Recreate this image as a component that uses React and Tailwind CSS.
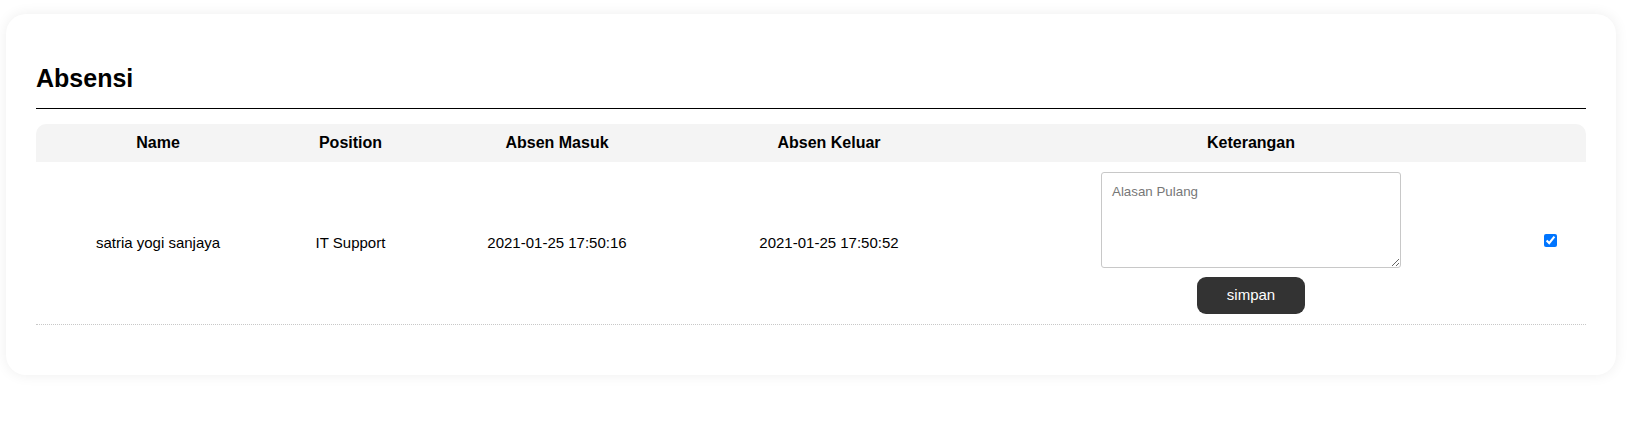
export default function App() {
  return (
    <div className="min-h-[423px] bg-white pt-[14px] pl-[6px] font-['Liberation_Sans',Arial,sans-serif] text-black">
      <div className="w-[1610px] rounded-[20px] bg-white px-[30px] pt-[30px] pb-[50px] shadow-[0_0_14px_rgba(0,0,0,0.07)]">
        <h2 className="mt-[20px] text-[25px] font-bold leading-[29px]">Absensi</h2>
        <hr className="mt-[15px] border-0 border-t border-black" />

        <div className="mt-[15px]">
          <div className="grid h-[38px] grid-cols-[244px_141px_272px_272px_572px_1fr] items-center rounded-t-[10px] bg-[#f4f4f4] text-[16px] font-bold">
            <div className="text-center">Name</div>
            <div className="text-center">Position</div>
            <div className="text-center">Absen Masuk</div>
            <div className="text-center">Absen Keluar</div>
            <div className="text-center">Keterangan</div>
            <div></div>
          </div>

          <div className="grid grid-cols-[244px_141px_272px_272px_572px_1fr] items-center border-b border-dotted border-[#c8c8c8] text-[15px]">
            <div className="text-center">satria yogi sanjaya</div>
            <div className="text-center">IT Support</div>
            <div className="text-center">2021-01-25 17:50:16</div>
            <div className="text-center">2021-01-25 17:50:52</div>
            <div className="flex flex-col items-center gap-[9px] py-[10px]">
              <textarea
                placeholder="Alasan Pulang"
                className="h-[96px] w-[300px] rounded-[3px] border border-[#c8c8c8] px-[10px] py-[9px] text-[13.33px] outline-none placeholder:text-[#777]"
              />
              <button className="h-[37px] rounded-[9px] bg-[#333] px-[30px] text-[15px] text-white">
                simpan
              </button>
            </div>
            <div className="-mt-[5px] flex pl-[7px]">
              <input type="checkbox" defaultChecked className="m-0 h-[13px] w-[13px] accent-[#0075ff]" />
            </div>
          </div>
        </div>
      </div>
    </div>
  )
}
